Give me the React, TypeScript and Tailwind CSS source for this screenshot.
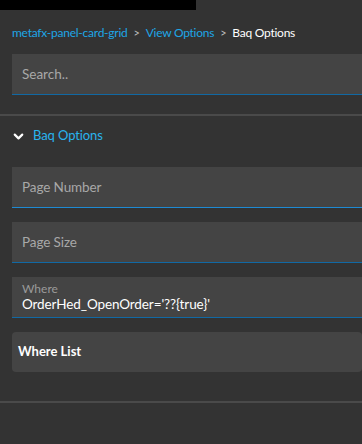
import { ChevronDown } from "lucide-react";

function Field({ label, border }: { label: string; border: string }) {
    return (
        <div className={`h-[41px] bg-[#444444] border-b-[1.5px] ${border} flex items-center pl-[10px]`}>
            <span className="text-[13.5px] tracking-[-0.1px] text-[#a8a8a8]">{label}</span>
        </div>
    );
}

export default function App() {
    return (
        <div className="w-[362px] h-[444px] bg-[#333333] overflow-hidden" style={{ fontFamily: "Lato, 'Noto Sans', sans-serif" }}>
            <div className="w-[196px] h-[10px] bg-black" />

            {/* Breadcrumb */}
            <div className="flex items-center gap-[6px] pl-3 mt-[14px] h-[18px] text-[12px] tracking-[-0.25px]">
                <span className="text-[#1ea6e6]">metafx-panel-card-grid</span>
                <span className="text-[#bdbdbd] text-[11px]">&gt;</span>
                <span className="text-[#1ea6e6]">View Options</span>
                <span className="text-[#bdbdbd] text-[11px]">&gt;</span>
                <span className="text-white">Baq Options</span>
            </div>

            {/* Search */}
            <div className="ml-3 mt-[12px]">
                <div className="h-[41px] bg-[#444444] border-b-[1.5px] border-[#1169a4] flex items-center pl-[10px]">
                    <span className="text-[13.5px] text-[#a8a8a8]">Search..</span>
                </div>
            </div>

            <hr className="mt-[19px] border-t-2 border-[#4a4a4a]" />

            {/* Accordion */}
            <div className="flex items-center gap-[7px] pl-[11px] mt-[10px] h-[20px]">
                <ChevronDown size={15} strokeWidth={3.5} className="text-white" />
                <span className="text-[#29b3ee] text-[13px] tracking-[-0.1px]">Baq Options</span>
            </div>

            <div className="ml-3 mt-[21px] flex flex-col gap-[14px]">
                <Field label="Page Number" border="border-[#1e8ad3]" />
                <Field label="Page Size" border="border-[#1169a4]" />
                <div className="h-[41px] bg-[#444444] border-b-[1.5px] border-[#1169a4] flex flex-col justify-center pl-[10px]">
                    <span className="text-[12px] leading-[14px] text-[#9a9a9a]">Where</span>
                    <span className="text-[13.5px] leading-[17px] tracking-[-0.1px] text-white">OrderHed_OpenOrder='??{"{true}"}'</span>
                </div>
                <div className="h-[40px] bg-[#444444] rounded-[4px] flex items-center pl-[6px]">
                    <span className="text-[13px] font-bold text-white">Where List</span>
                </div>
            </div>

            <hr className="mt-[29px] border-t-2 border-[#4a4a4a]" />
        </div>
    );
}
